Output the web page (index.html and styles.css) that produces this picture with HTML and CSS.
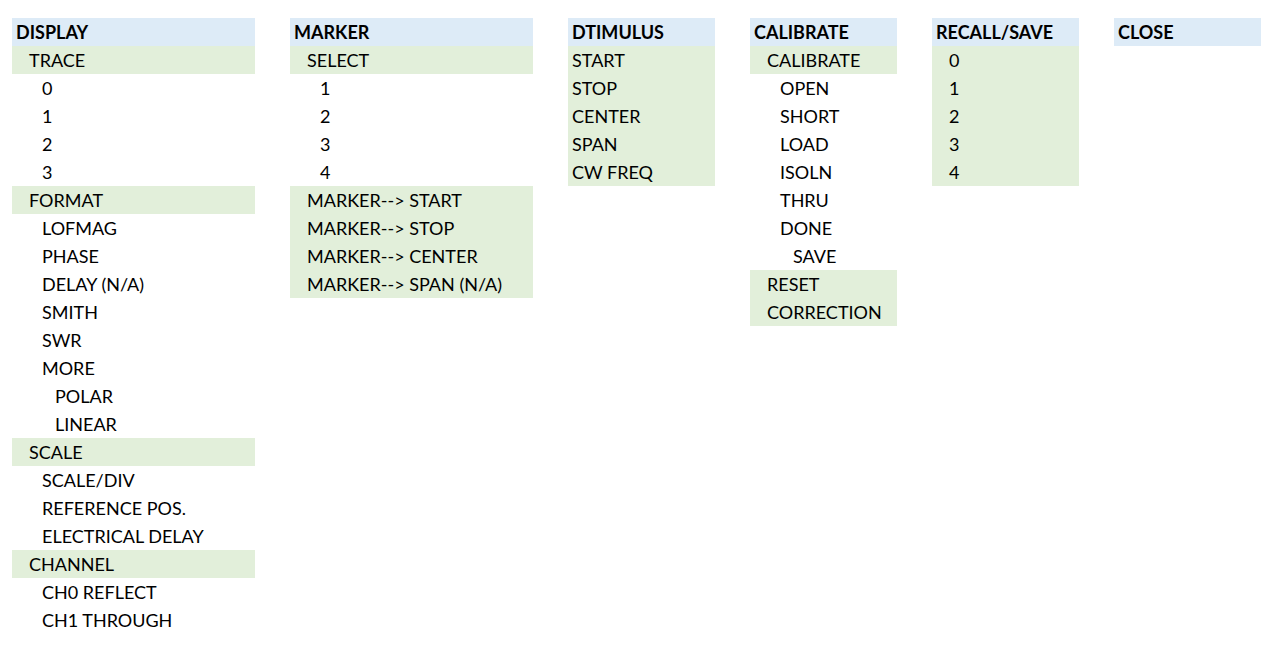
FILE: index.html
```html
<!DOCTYPE html>
<html>
<head>
<meta charset="utf-8">
<link rel="stylesheet" href="styles.css">
</head>
<body>
<div class="sheet">
  <div class="col wide">
    <div class="row head">DISPLAY</div>
    <div class="row l1 green">TRACE</div>
    <div class="row l2">0</div>
    <div class="row l2">1</div>
    <div class="row l2">2</div>
    <div class="row l2">3</div>
    <div class="row l1 green">FORMAT</div>
    <div class="row l2">LOFMAG</div>
    <div class="row l2">PHASE</div>
    <div class="row l2">DELAY (N/A)</div>
    <div class="row l2">SMITH</div>
    <div class="row l2">SWR</div>
    <div class="row l2">MORE</div>
    <div class="row l3">POLAR</div>
    <div class="row l3">LINEAR</div>
    <div class="row l1 green">SCALE</div>
    <div class="row l2">SCALE/DIV</div>
    <div class="row l2">REFERENCE POS.</div>
    <div class="row l2">ELECTRICAL DELAY</div>
    <div class="row l1 green">CHANNEL</div>
    <div class="row l2">CH0 REFLECT</div>
    <div class="row l2">CH1 THROUGH</div>
  </div>
  <div class="col wide">
    <div class="row head">MARKER</div>
    <div class="row l1 green">SELECT</div>
    <div class="row l2">1</div>
    <div class="row l2">2</div>
    <div class="row l2">3</div>
    <div class="row l2">4</div>
    <div class="row l1 green">MARKER--&gt; START</div>
    <div class="row l1 green">MARKER--&gt; STOP</div>
    <div class="row l1 green">MARKER--&gt; CENTER</div>
    <div class="row l1 green">MARKER--&gt; SPAN (N/A)</div>
  </div>
  <div class="col narrow">
    <div class="row head">DTIMULUS</div>
    <div class="row green">START</div>
    <div class="row green">STOP</div>
    <div class="row green">CENTER</div>
    <div class="row green">SPAN</div>
    <div class="row green">CW FREQ</div>
  </div>
  <div class="col narrow">
    <div class="row head">CALIBRATE</div>
    <div class="row l1 green">CALIBRATE</div>
    <div class="row l2">OPEN</div>
    <div class="row l2">SHORT</div>
    <div class="row l2">LOAD</div>
    <div class="row l2">ISOLN</div>
    <div class="row l2">THRU</div>
    <div class="row l2">DONE</div>
    <div class="row l3">SAVE</div>
    <div class="row l1 green">RESET</div>
    <div class="row l1 green">CORRECTION</div>
  </div>
  <div class="col narrow">
    <div class="row head">RECALL/SAVE</div>
    <div class="row l1 green">0</div>
    <div class="row l1 green">1</div>
    <div class="row l1 green">2</div>
    <div class="row l1 green">3</div>
    <div class="row l1 green">4</div>
  </div>
  <div class="col narrow">
    <div class="row head">CLOSE</div>
  </div>
</div>
</body>
</html>
```
FILE: styles.css
```css
html, body {
  margin: 0;
  background: #ffffff;
}
.sheet {
  display: flex;
  align-items: flex-start;
  gap: 35px;
  padding: 18px 0 0 12px;
  font-family: Lato, "Open Sans", sans-serif;
  font-size: 18px;
  color: #000;
}
.col {
  display: flex;
  flex-direction: column;
}
.wide { width: 243px; }
.narrow { width: 147px; }
.row {
  height: 28px;
  line-height: 28px;
  padding-left: 4px;
  white-space: nowrap;
}
.head {
  background: #ddebf7;
  font-weight: bold;
}
.green { background: #e2efda; }
.l1 { padding-left: 17px; }
.l2 { padding-left: 30px; }
.l3 { padding-left: 43px; }
```
